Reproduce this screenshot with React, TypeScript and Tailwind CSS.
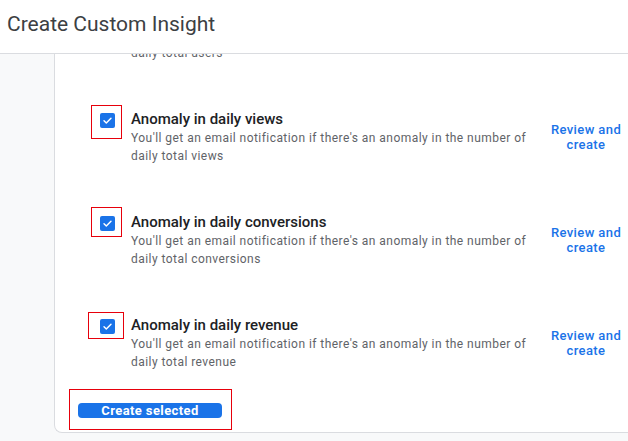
import React from "react";

const font = { fontFamily: "Roboto, 'Liberation Sans', Arial, sans-serif" };

type Insight = {
  title: string;
  line1: string;
  line2: string;
  // red annotation box around the checkbox, relative to checkbox top-left
  mark: string;
};

const insights: Insight[] = [
  {
    title: "Anomaly in daily views",
    line1: "You'll get an email notification if there's an anomaly in the number of",
    line2: "daily total views",
    mark: "-left-[9px] -top-[8px] w-[31px] h-[34px]",
  },
  {
    title: "Anomaly in daily conversions",
    line1: "You'll get an email notification if there's an anomaly in the number of",
    line2: "daily total conversions",
    mark: "-left-[9px] -top-[9px] w-[31px] h-[30px]",
  },
  {
    title: "Anomaly in daily revenue",
    line1: "You'll get an email notification if there's an anomaly in the number of",
    line2: "daily total revenue",
    mark: "-left-[12px] -top-[7px] w-[36px] h-[27px]",
  },
];

function Checkbox({ mark }: { mark: string }) {
  return (
    <div className="relative mt-[4px] h-[15px] w-[15px] shrink-0">
      <div className="flex h-[15px] w-[15px] items-center justify-center rounded-[2px] bg-[#1a73e8]">
        <svg width="11" height="11" viewBox="0 0 12 12" fill="none">
          <path d="M2.2 6.3l2.5 2.4 5.1-5.2" stroke="white" strokeWidth="1.6" strokeLinecap="round" strokeLinejoin="round" />
        </svg>
      </div>
      <div className={`pointer-events-none absolute border border-solid border-red-600 ${mark}`} />
    </div>
  );
}

function InsightRow({ item }: { item: Insight }) {
  return (
    <div className="flex h-[56px] items-center">
      <div className="flex flex-1 items-start gap-[16px] self-start">
        <Checkbox mark={item.mark} />
        <div className="min-w-0">
          <div className="text-[15px] font-medium leading-[20px] text-[#202124]">{item.title}</div>
          <div className="whitespace-nowrap text-[12px] leading-[18px] tracking-[0.45px] text-[#5f6368]">
            {item.line1}
            <br />
            {item.line2}
          </div>
        </div>
      </div>
      <a className="w-[84px] shrink-0 text-center text-[13px] font-medium leading-[15px] tracking-[0.4px] text-[#1a73e8]">
        Review and
        <br />
        create
      </a>
    </div>
  );
}

export default function App() {
  return (
    <div className="flex h-[441px] w-[628px] flex-col overflow-hidden bg-[#f8f9fa]" style={font}>
      <header className="h-[54px] shrink-0 border-b border-[#dadce0] bg-white pl-[7px] pt-[10px]">
        <h1 className="text-[21px] font-normal leading-[28px] text-[#3c4043]">Create Custom Insight</h1>
      </header>

      <div className="flex flex-1">
        <div className="w-[54px] shrink-0" />
        <div className="mb-[8px] flex flex-1 flex-col overflow-hidden rounded-bl-[8px] border-b border-l border-[#dadce0] bg-white">
          <div className="-mt-[10px] pl-[76px] text-[12px] leading-[18px] tracking-[0.45px] text-[#5f6368]">daily total users</div>

          <div className="mt-[47px] flex flex-col gap-[47px] pl-[45px]">
            {insights.map((it) => (
              <InsightRow key={it.title} item={it} />
            ))}
          </div>

          <div className="ml-[14px] mt-[18px] h-[41px] w-[163px] border border-solid border-red-600 pl-[8px] pt-[13px]">
            <button
              type="button"
              className="flex h-[15px] w-[144px] items-center justify-center rounded-[4px] bg-[#1a73e8] text-[13px] font-bold leading-[15px] tracking-[0.4px] text-white"
            >
              Create selected
            </button>
          </div>
        </div>
      </div>
    </div>
  );
}
